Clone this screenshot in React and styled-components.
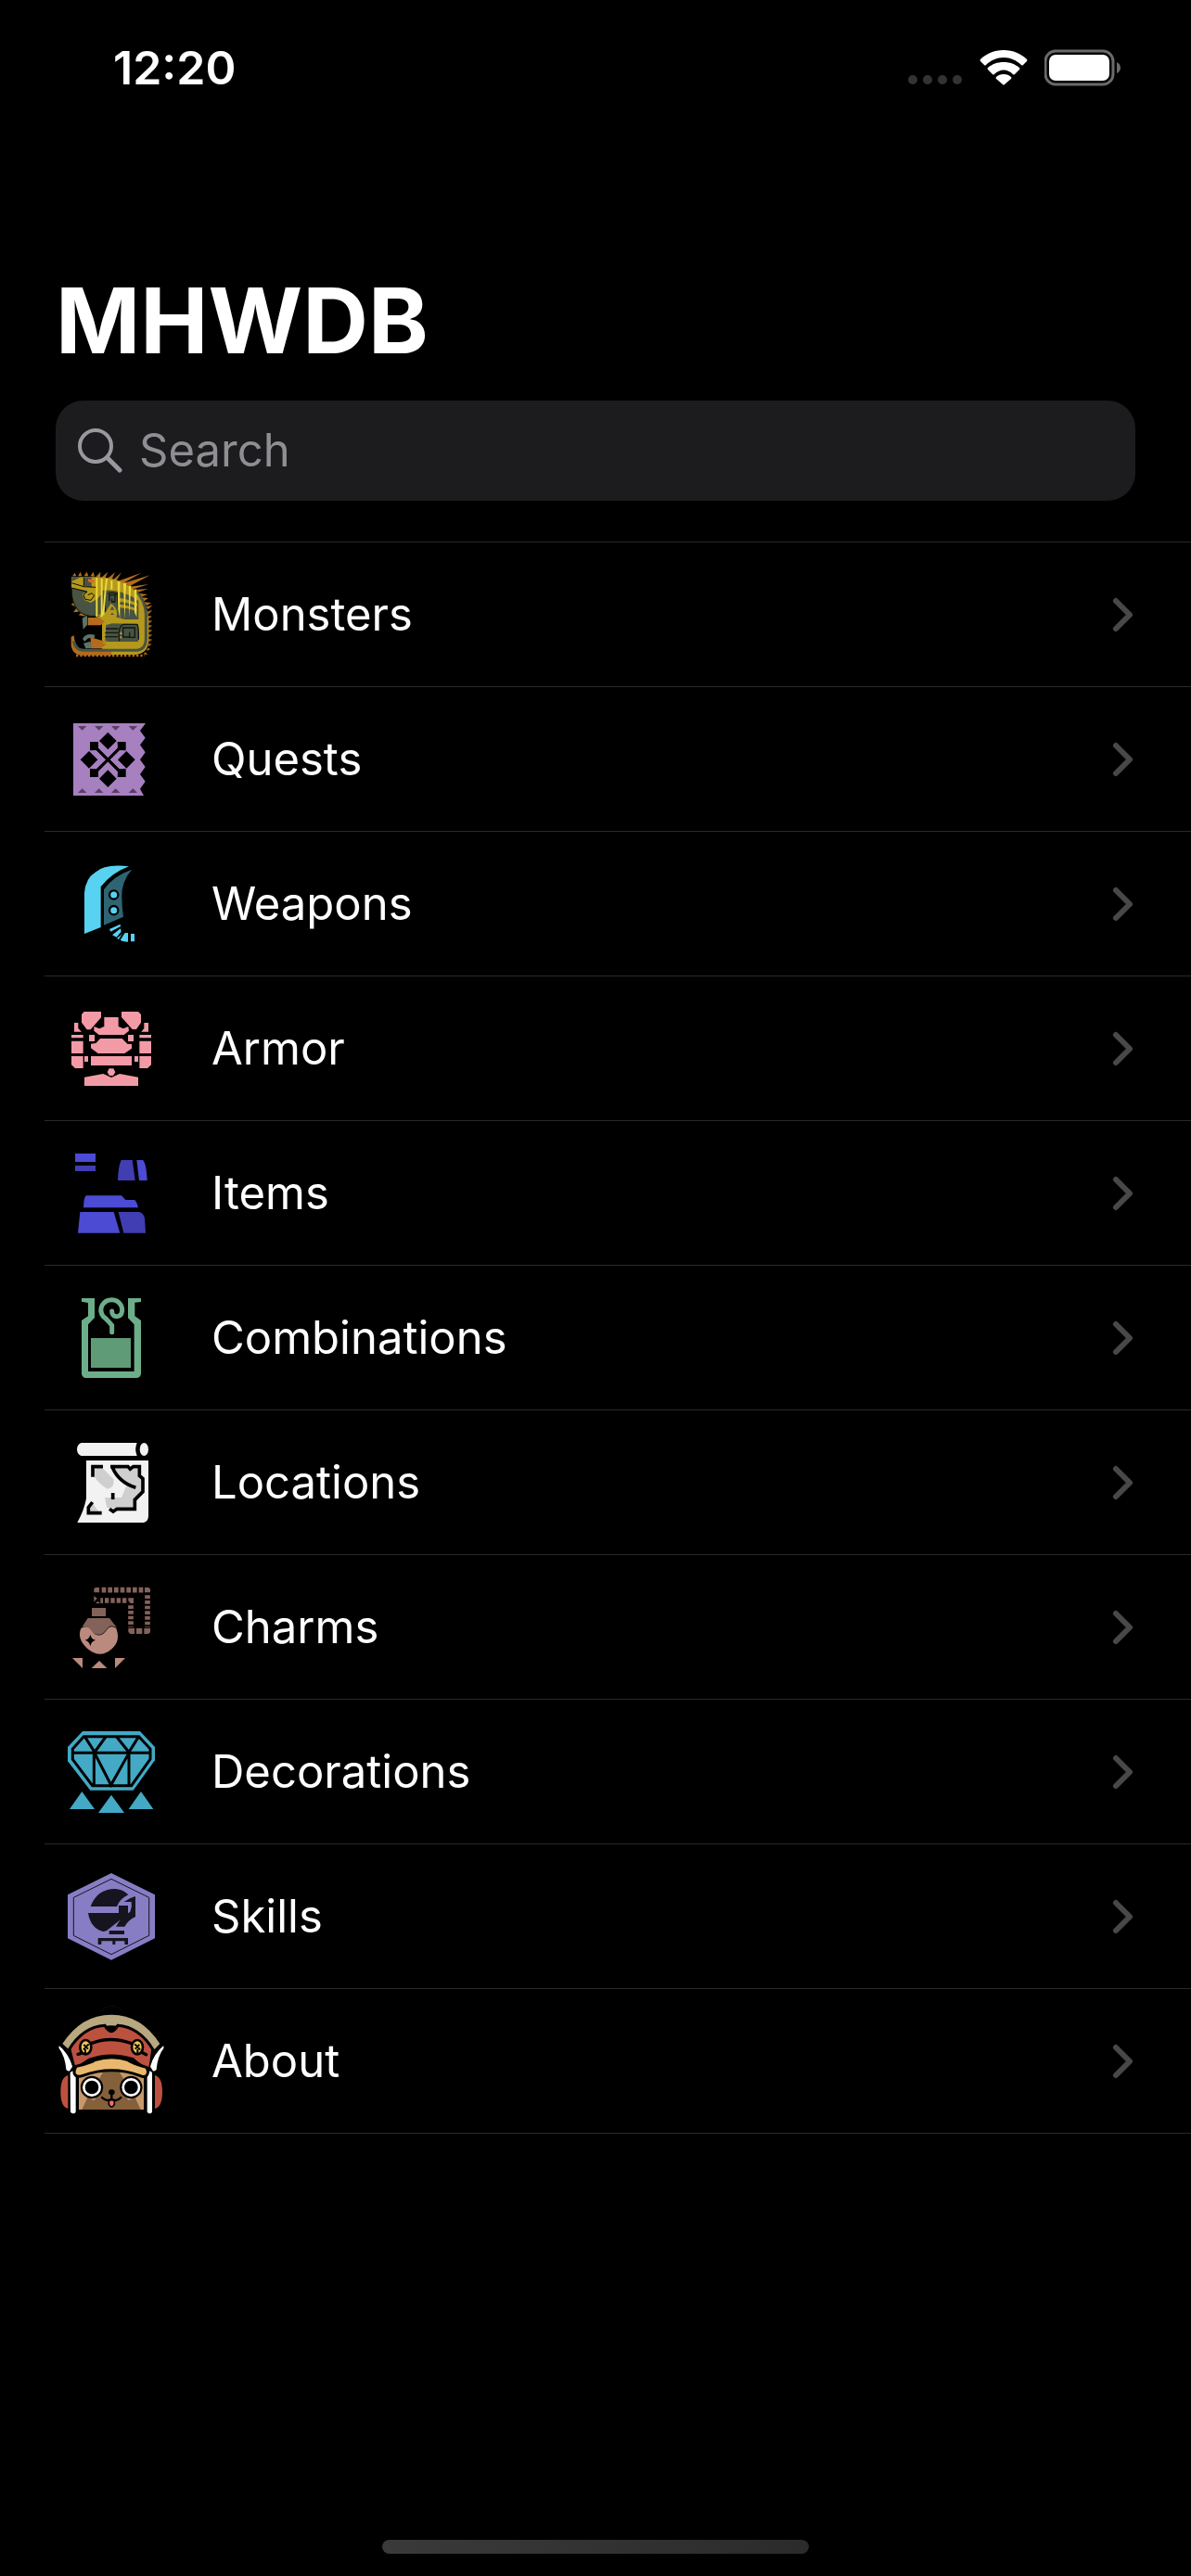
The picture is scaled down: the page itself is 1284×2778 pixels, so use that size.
import React from "react";
import styled, { createGlobalStyle } from "styled-components";

const GlobalStyle = createGlobalStyle`
  *, *::before, *::after { box-sizing: border-box; }
  body {
    margin: 0;
    background: #000;
    color: #fff;
    font-family: Inter, "Liberation Sans", sans-serif;
  }
`;

const Screen = styled.div`
  min-height: 100vh;
  display: flex;
  flex-direction: column;
`;

const StatusBar = styled.header`
  display: flex;
  align-items: center;
  justify-content: space-between;
  height: 146px;
  padding: 0 76px 0 122px;
`;

const Clock = styled.time`
  font-size: 50px;
  line-height: 60px;
  font-weight: 600;
`;

const StatusIcons = styled.div`
  display: flex;
  align-items: center;
  gap: 18px;
`;

const TitleArea = styled.div`
  padding: 140px 60px 44px;
`;

const Title = styled.h1`
  margin: 0;
  font-size: 98px;
  line-height: 120px;
  font-weight: 700;
`;

const SearchBox = styled.label`
  display: flex;
  align-items: center;
  gap: 18px;
  height: 108px;
  margin-top: 26px;
  padding: 0 24px;
  border-radius: 30px;
  background: #1c1c1e;
`;

const SearchInput = styled.input`
  flex: 1;
  min-width: 0;
  padding: 0;
  border: 0;
  outline: 0;
  background: transparent;
  color: #fff;
  font-family: inherit;
  font-size: 49px;
  line-height: 60px;

  &::placeholder {
    color: #8e8e93;
    opacity: 1;
  }
`;

const List = styled.ul`
  list-style: none;
  margin: 0 0 0 48px;
  padding: 0;
  border-top: 1px solid #29292b;
`;

const Row = styled.li`
  border-bottom: 1px solid #29292b;
`;

const RowLink = styled.a`
  display: flex;
  align-items: center;
  height: 155px;
  padding: 0 60px 0 2px;
  color: inherit;
  text-decoration: none;
`;

const RowLabel = styled.span`
  flex: 1;
  padding-left: 38px;
  font-size: 49px;
  line-height: 60px;
`;

const Footer = styled.footer`
  display: flex;
  justify-content: center;
  margin-top: auto;
  padding-bottom: 24px;
`;

const HomeIndicator = styled.div`
  width: 460px;
  height: 15px;
  border-radius: 8px;
  background: linear-gradient(90deg, #3a3a3a, #2b2b2b);
`;

const Glyph = styled.svg`
  display: block;
  flex: none;
`;

function MonsterArt() {
  return (
    <>
      <path
        fill="#b06d1c"
        d="M84 94l8-11 5 11zM102 94l8-14 5 14zM121 94l10-14 5 14zM142 94l10-14 4 15zM160 96l15-16-1 19zM178 98l21-18-9 21zM197 102l25-20-11 24zM214 107l29-25-18 29zM229 111l78-28-58 34zM251 116l84-25-66 36zM269 128l62-8-49 16zM283 138l46-3-35 12zM296 149l31 4-19 8zM308 163l22 2-14 10zM317 178l22 2-15 10zM323 192l20-3-15 13zM80 186l11-10 2 16zM87 211l14-18 2 16zM104 220l12-10 10 14zM328 208l15-4-15 15zM330 222l12 2-12 8zM331 237l12 2-12 8zM331 252l12 2-12 8zM331 267l12 2-12 8zM331 282l12 2-12 8zM331 297l12 2-12 8zM331 312l10 2-12 8zM327 326l10 4-13 6zM319 340l10 7-15 0z"
      />
      <path stroke="#b06d1c" strokeWidth="7" strokeDasharray="7 6" d="M96 351H318" />
      <path fill="#b5991d" d="M81 97l91 0c60 3 109 29 133 64q24 34 26 77v66q-3 40-42 44H180V222q-50 10-78-16-21-24-21-78z" />
      <path fill="#b46b1d" d="M80 290l9-4q4 42 32 48h90v16h-97q-28-1-34-30z" />
      <path fill="#485342" d="M82 132l52 10-18 10 8 20 20 8 20-12 28-30 2 68q-28 20-62 16-50-12-50-90zM122 98l24 0v32l-24-5zM82 97l30 0-30 14zM180 140q70-4 118 34v60h-45l-50-14-20 9z" />
      <path fill="none" stroke="#485342" strokeWidth="9" d="M286 138q35 34 36 80v78q0 38-36 38H122q-28 0-34-30" />
      <path fill="none" stroke="#0b0d07" strokeWidth="3" d="M82 116l39 12 40 2M121 98v29M82 132l50 13-12 9 6 15 18 3 11-15-8-8-13 6M82 132c-2 46 15 86 61 91h40" />
      <path fill="#e3622d" d="M135 103l22 5-9 8-13-4z" />
      <path fill="#b5991d" d="M232 164q30 3 62 18v9q-34-13-62-15zM233 185q32 2 59 14v8q-29-11-59-12z" />
      <path fill="none" stroke="#121509" strokeWidth="4" d="M191 145q-6 36 2 72M229 146l4 54M199 151q18-8 29 2M204 175v-20h18v22h-10v-10" />
      <path fill="#b5991d" d="M191 211l18-29q19 13 20 35-6 27-31 35l-26-10-10-14z" />
      <path fill="#b46b1d" d="M134 228h38l16 13-12 12h-42z" />
      <path fill="#485342" d="M193 252l20-5 84 2v57h-95l-12-3z" />
      <path fill="none" stroke="#11160f" strokeWidth="4" d="M192 264h40M190 277h41M190 290h40M236 304q-6-51 15-54h42q6 5 5 49M270 291h-22v-30h38v31h-17v-17" />
      <path fill="#b46b1d" d="M143 292l60 17-8 19h-52z" />
      <path fill="#b5991d" d="M178 309l22-2h97q-2 19-17 20H176l18-12z" />
      <path fill="#5c7369" d="M116 230l16-9v30l-13 15zM117 297q10-20 40-13l-2 10-20 1-11 10zM120 311l22-6 5 22-20 1z" />
      <path fill="none" stroke="#ecd83b" strokeWidth="6" d="M163 99v127M179 102v124M195 103l-4 35-7 82M211 108v29" />
      <path fill="#ecd83b" d="M230 112h8v119l-6-30zM249 116h9l-5 119zM266 125h8l-6 103zM284 137h8v89l-7-15z" />
      <path fill="#485342" d="M206 203l7-12 7 12zM207 219l6-7 6 7z" />
      <path fill="#b5991d" d="M236 282l5-9 5 9zM236 295l5-8 5 8z" />
    </>
  );
}

function QuestArt() {
  return (
    <>
      <path fill="#a780c0" d="M87 90h234l-18 24 17 23-17 23 17 24-17 24 17 23-17 24 17 23-17 24 12 22H87z" />
      <path fill="#584065" d="M102 99h28l-14 14zM156 99h28l-14 14zM210 99h28l-14 14zM266 99h28l-14 14zM102 315h28l-14-14zM156 315h28l-14-14zM210 315h28l-14-14zM266 315h28l-14-14z" />
      <path d="M199 119l28 28-28 28-28-28zM199 241l28 28-28 28-28-28zM138 180l28 28-28 28-28-28zM259 180l28 28-28 28-28-28z" />
      <path d="M141 150h27v18l31 33 31-33v-18h27v28h-19l-32 30 32 29h19v27h-27v-18l-31-33-31 33v18h-27v-27h19l32-29-32-30h-19z" />
      <path fill="#a780c0" d="M168 157q13 27 31 31 18-4 31-31v14l-31 31-31-31zM168 259q13-27 31-31 18 4 31 31v-14l-31-31-31 31zM148 178q26 13 30 30-4 18-30 30h14l30-30-30-30zM250 178q-26 13-30 30 4 18 30 30h-14l-30-30 30-30z" />
      <path stroke="#000" strokeWidth="9" d="M165 174l68 68M233 174l-68 68" />
    </>
  );
}

function WeaponArt() {
  return (
    <>
      <path fill="#57d2f1" d="M123 306V173Q127 126 158 107 190 79 267 88 212 108 176 154V285z" />
      <path fill="#2e6573" d="M186 278V163q29-43 90-65-34 41-32 89 0 32 5 64z" />
      <g fill="#57d2f1" stroke="#000" strokeWidth="7">
        <circle cx="218" cy="180" r="14" />
        <circle cx="218" cy="230" r="14" />
      </g>
      <path fill="#57d2f1" d="M204 291l35-16 1 7-32 17zM213 310l27-21 2 10-15 18zM228 321l20-17 16-1v29q-20 0-36-11zM273 306h12v25h-12z" />
      <path stroke="#000" strokeWidth="6" d="M236 326l16-26" />
    </>
  );
}

function ArmorArt() {
  return (
    <path
      fill="#f29ba6"
      d="M122 93h55v19l-34 39h-12l-17-23v-26zM243 93h54l9 9v26l-15 22h-13l-35-39zM187 111h46v30l16 7 16-7 2 14-16 13h-81l-16-13v-14l17 7 16-7zM90 129h13v18l11 11H90zM316 129h14v29h-23l9-11zM81 168h38v10H81zM301 168h38v10h-38zM138 168h18v21h-18zM264 168h18v21h-18zM81 188h38v40H81zM301 188h38v40h-38zM174 180h71l17 17 14 1v14l-23 16h-86l-23-17v-14l16-2zM81 237h38v39H93l-12-11zM301 237h38v28l-12 11h-26zM123 237h12v18h-12zM285 237h12v18h-12zM144 237h132v30H144zM203 277h14l6 12-7 11h-12l-7-11zM123 305l61-11 26 12 27-12 60 11v28H123z"
    />
  );
}

function ItemArt() {
  return (
    <>
      <path fill="#4b4bd4" d="M93 87h66v27H93zM292 108h20q11 9 14 66h-26zM128 223h115l13 14h29q7 4 12 25H120q1-32 8-39zM109 276h109l20 68H102z" />
      <path fill="#403eb2" d="M93 126h66v18H93zM242 108h36l9 66h-56q1-44 11-66zM233 276h68q13 4 17 20l3 48h-71z" />
    </>
  );
}

function CombinationArt() {
  return (
    <>
      <path fill="#6dae8a" d="M114 90h42v63l-21 22v152h149V175l-20-21V90h42v12l-20 2v44l20 14v173q-3 13-15 13H128q-12-1-14-13V162l21-14v-43l-21-4z" />
      <path fill="#609b78" d="M144 219h129v96H144z" />
      <path fill="none" stroke="#6dae8a" strokeWidth="15" strokeLinecap="round" d="M212 200v-22q-16-20-28-29c-18-24-1-54 28-54 25 0 38 25 31 44-4 13-22 12-28 4-3-3-3-8-3-11" />
    </>
  );
}

function LocationArt() {
  return (
    <>
      <path fill="#f2f2f2" d="M112 78h181q-9 20 0 42H112q-13-6-13-21t13-21zM129 135h201v180q-1 17-15 21H100q22-40 29-78z" />
      <ellipse cx="316" cy="99" rx="14" ry="21" fill="#f2f2f2" />
      <path fill="#cfcfcf" d="M157 159h24l36 36q6 28-20 32-31-19-44-43zM214 158l49 4 8 7 12-8h13v26l15 11v35l-28 25v31h-61l-26-1-7-33h54l16-38q-36-25-45-59zM138 300l12-26 20 28z" />
      <path fill="none" stroke="#000" strokeWidth="11" d="M183 155h-33v33M207 155h57l7 8 10-8h20v29l11 10v42l-26 26v30h-58l-12 8-12-8M214 158q20 47 75 65M215 240v21M149 270l-13 17v18h43" />
    </>
  );
}

function CharmArt() {
  return (
    <>
      <g fill="none" stroke="#83625a" strokeWidth="17">
        <path strokeDasharray="14 6" d="M179 89h141" />
        <path strokeDasharray="11 6" d="M327 106v104M273 139v70" />
        <path strokeDasharray="13 6" d="M189 123h73" />
      </g>
      <path fill="#83625a" d="M154 85l5-4h12v16h-17zM318 81h13l5 5v11h-18zM265 115h17v17h-10l-7-8zM265 213h20v18h-14l-6-6zM291 213h19v18h-19zM316 213h20v13l-6 5h-14zM154 108l10 8-10 12zM175 115h8v17h-8zM158 132l9-6 7 7zM147 147h45v27h-45zM134 180h70l24 31-12-5q-13-4-25 15-22 25-45 0-11-18-30-13z" />
      <path fill="#b98a7d" d="M112 213q19-13 35 8 22 29 46 0 14-22 33-8 14 39-10 62-42 43-87 0-31-31-17-62z" />
      <path d="M142 233q3 15 17 18-14 4-17 20-3-16-17-20 14-3 17-18z" />
      <path fill="#b98a7d" d="M84 309h33v33zM146 342l25-24 25 24zM222 309h33l-33 33z" />
    </>
  );
}

function DecorationArt() {
  return (
    <>
      <path fill="#43a9c5" d="M117 81h186l48 51v43l-70 97H142L69 178v-46z" />
      <path fill="none" stroke="#000" strokeWidth="9" d="M121 98h178l37 40v33l-61 86H149L85 172v-34zM86 151h249M124 98l33 52M192 99l-37 51 54 105 59-105-41-51M299 98l-33 52M154 151v106M267 151v106" />
      <path fill="#43a9c5" d="M115 276l41 57H75zM210 287l42 58h-84zM306 276l40 57h-80z" />
    </>
  );
}

function SkillArt() {
  return (
    <>
      <path fill="#877dc4" d="M210 75l141 70v141l-141 70-141-70V145z" />
      <path fill="none" stroke="#16141e" strokeWidth="3" d="M210 94l122 60v123l-122 61-122-61V154z" />
      <path fill="#16141e" d="M143 183q21-57 79-57 23 0 43 19-28 14-37 38zM135 204h99v-24h30v27l-70 55-10 2q-41-10-49-60zM251 168q17-13 37-18v66q-24 11-35 32h-28q15-30 46-48 7-17 4-32zM203 261h49v12h-49zM167 285h97v21h-11v-11h-30v11h-9v-11h-36v11h-11z" />
    </>
  );
}

function AboutArt() {
  return (
    <>
      <path fill="none" stroke="#151515" strokeWidth="3" strokeDasharray="5 4" d="M174 44q36-38 75 0" />
      <path fill="#b9a77f" d="M52 147q61-94 158-94t157 94l-18 19q-51-78-139-78-87 0-137 78z" />
      <path fill="#bd5140" d="M78 160q45-65 111-69 20 34 42 0 67 5 109 69l-8 63q-27-7-50-30-72-24-145 1l-43 29zM70 249q-24 6-24 54t24 54zM351 249q24 6 24 54t-24 54z" />
      <path fill="none" stroke="#000" strokeWidth="9" d="M72 168q46-76 117-80 21 38 42 0 70 5 115 80" />
      <path fill="#84603b" d="M105 247q105-67 210 0v113H105z" />
      <path fill="#c6986b" d="M105 254l28-12 53-8-22 38 10 29-37 59h-32zM315 254l-28-12-53-8 22 38-10 29 37 59h32z" />
      <path fill="#84603b" d="M135 317q18 22 38 5l74 0q19 17 38-5l20 43H115z" />
      <path fill="#fff" stroke="#000" strokeWidth="5" d="M39 148q35 28 48 73l-10 16q-9 3-15-4-4-46-24-71zM381 148q-35 28-48 73l10 16q9 3 15-4 4-46 24-71z" />
      <path fill="#fff" d="M77 240q9-9 18 0v128q-7 9-17 0zM326 240q8-9 16 0v128q-7 9-16 0z" />
      <path fill="#e9b86f" stroke="#000" strokeWidth="9" d="M97 220q49-11 60-20 56-18 107 0 14 10 59 23 10 13 2 26-8 8-23 1-91-33-184 0-22 8-28-8-1-13 7-22z" />
      <path fill="none" stroke="#000" strokeWidth="10" strokeLinecap="round" d="M102 181l10-3M145 146q62-25 130 0M311 176l12 6" />
      <g fill="#edc75e" stroke="#000" strokeWidth="8">
        <ellipse cx="127" cy="158" rx="18" ry="23" />
        <ellipse cx="294" cy="158" rx="18" ry="23" />
      </g>
      <path stroke="#000" strokeWidth="6" d="M121 150l14 14M137 148l-17 18M126 165v12M286 148l17 18M301 150l-14 14M295 165v12" />
      <g fill="#000" stroke="#000" strokeWidth="5">
        <circle cx="147" cy="288" r="34" />
        <circle cx="274" cy="288" r="34" />
      </g>
      <g fill="#000" stroke="#fff" strokeWidth="8">
        <circle cx="147" cy="288" r="26" />
        <circle cx="274" cy="288" r="26" />
      </g>
      <ellipse cx="211" cy="304" rx="10" ry="9" />
      <path fill="#ed706c" stroke="#000" strokeWidth="5" d="M202 329h18v14q-9 17-18 0z" />
      <path fill="none" stroke="#000" strokeWidth="7" strokeLinecap="round" d="M211 310v16M180 321q16 16 31 5 15 11 30-5" />
    </>
  );
}

/* shift moves each drawing within its frame, in drawing units */
const sections = [
  { name: "Monsters", Art: MonsterArt, shift: 9 },
  { name: "Quests", Art: QuestArt, shift: -3 },
  { name: "Weapons", Art: WeaponArt, shift: 0 },
  { name: "Armor", Art: ArmorArt, shift: 3 },
  { name: "Items", Art: ItemArt, shift: 6 },
  { name: "Combinations", Art: CombinationArt, shift: 9 },
  { name: "Locations", Art: LocationArt, shift: -3 },
  { name: "Charms", Art: CharmArt, shift: 0 },
  { name: "Decorations", Art: DecorationArt, shift: 3 },
  { name: "Skills", Art: SkillArt, shift: 6 },
  { name: "About", Art: AboutArt, shift: -6 },
];

function SignalDots() {
  return (
    <Glyph width="60" height="40" viewBox="0 0 60 40" fill="#333" aria-hidden="true">
      <circle cx="6" cy="33" r="5" />
      <circle cx="22" cy="33" r="5" />
      <circle cx="38" cy="33" r="5" />
      <circle cx="54" cy="33" r="5" />
    </Glyph>
  );
}

function Wifi() {
  return (
    <Glyph width="52" height="40" viewBox="0 0 52 40" fill="#fff" aria-hidden="true">
      <path d="M26 1C16 1 7 5 1 11q-1 1 0 2l4 4q1 1 2 0C12 12 19 9 26 9s14 3 19 8q1 1 2 0l4-4q1-1 0-2C45 5 36 1 26 1z" />
      <path d="M26 14c-7 0-12 2-17 6q-1 1 0 2l5 5q1 1 2 0c6-6 14-6 20 0q1 1 2 0l5-5q1-1 0-2c-5-4-10-6-17-6z" />
      <path d="M26 27q-5 0-8 3-1 1 0 2l7 6q1 1 2 0l7-6q1-1 0-2-3-3-8-3z" />
    </Glyph>
  );
}

function Battery() {
  return (
    <Glyph width="82" height="40" viewBox="0 0 82 40" aria-hidden="true">
      <rect x="1" y="2" width="73" height="36" rx="11" fill="none" stroke="#6a6a6a" strokeWidth="3" />
      <rect x="5" y="6" width="65" height="28" rx="7" fill="#fff" />
      <path fill="#6a6a6a" d="M78 14q4 2 4 6t-4 6z" />
    </Glyph>
  );
}

function Magnifier() {
  return (
    <Glyph width="48" height="48" viewBox="0 0 48 48" fill="none" stroke="#98989f" strokeLinecap="round" aria-hidden="true">
      <circle cx="19" cy="19" r="17" strokeWidth="4" />
      <path strokeWidth="5" d="M32 32l13 13" />
    </Glyph>
  );
}

function Chevron() {
  return (
    <Glyph width="28" height="40" viewBox="0 0 28 40" fill="none" stroke="#48484a" strokeWidth="6" strokeLinecap="round" strokeLinejoin="round" aria-hidden="true">
      <path d="M7 5l15 15L7 35" />
    </Glyph>
  );
}

export default function App() {
  return (
    <>
      <GlobalStyle />
      <Screen>
        <StatusBar>
          <Clock>12:20</Clock>
          <StatusIcons>
            <SignalDots />
            <Wifi />
            <Battery />
          </StatusIcons>
        </StatusBar>
        <TitleArea>
          <Title>MHWDB</Title>
          <SearchBox>
            <Magnifier />
            <SearchInput type="search" placeholder="Search" aria-label="Search" />
          </SearchBox>
        </TitleArea>
        <nav>
          <List>
            {sections.map(({ name, Art, shift }) => (
              <Row key={name}>
                <RowLink href={`#${name.toLowerCase()}`}>
                  <Glyph width="140" height="140" viewBox={`0 ${shift} 420 420`} aria-hidden="true">
                    <Art />
                  </Glyph>
                  <RowLabel>{name}</RowLabel>
                  <Chevron />
                </RowLink>
              </Row>
            ))}
          </List>
        </nav>
        <Footer>
          <HomeIndicator />
        </Footer>
      </Screen>
    </>
  );
}
